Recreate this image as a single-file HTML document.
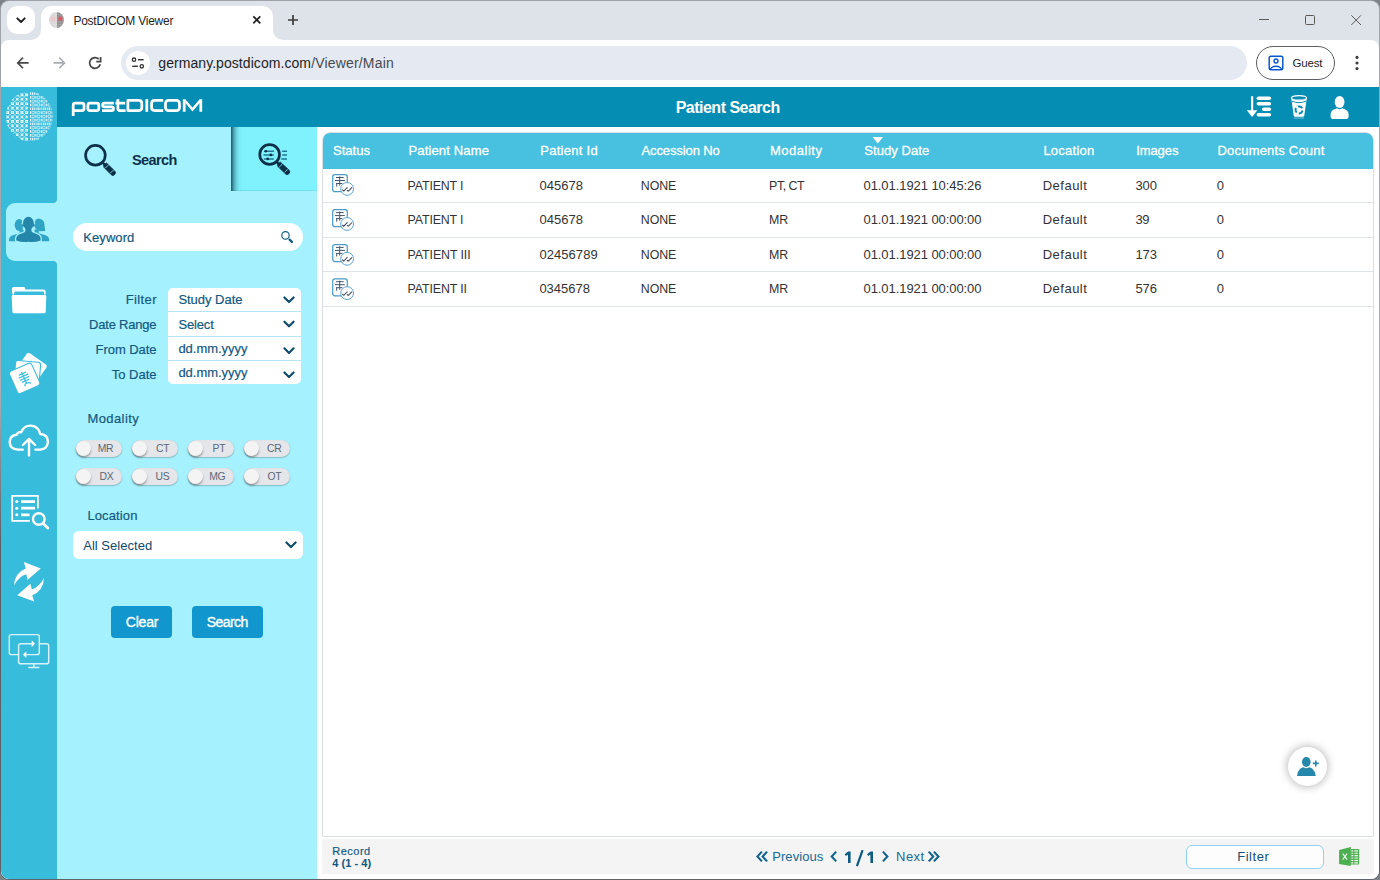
<!DOCTYPE html>
<html><head><meta charset="utf-8"><title>PostDICOM Viewer</title>
<style>
*{box-sizing:border-box;margin:0;padding:0}
html,body{width:1380px;height:880px;overflow:hidden;background:#7d8288;font-family:"Liberation Sans",sans-serif}
#win{position:absolute;left:0;top:0;width:1380px;height:880px;overflow:hidden}
#frameb{position:absolute;left:0;top:0;width:1380px;height:880px;border-radius:9px;background:linear-gradient(180deg,#9fa2a8 0%,#a9acb2 45%,#5a5d63 62%,#5f6369 100%)}
#frame{position:absolute;left:1px;top:1px;width:1378px;height:878px;background:#dee2e9;border-radius:8px;overflow:hidden}
.a{position:absolute}
.t{position:absolute;white-space:pre}
svg{position:absolute;overflow:visible}
</style></head><body>

<div id="win">
<div id="frameb"></div><div id="frame"></div>
<!-- tab search button -->
<div class="a" style="left:7px;top:6px;width:28px;height:28px;border-radius:10px;background:#fff"></div>
<!-- active tab -->
<div class="a" style="left:41px;top:6px;width:232px;height:34px;background:#fff;border-radius:10px 10px 0 0"></div>
<svg style="left:31px;top:30px" width="10" height="10"><path d="M10 0V10H0A10 10 0 0 0 10 0Z" fill="#fff"/></svg>
<svg style="left:273px;top:30px" width="10" height="10"><path d="M0 0V10H10A10 10 0 0 1 0 0Z" fill="#fff"/></svg>
<!-- toolbar -->
<div class="a" style="left:1px;top:40px;width:1378px;height:47px;background:#fff;border-radius:8px 8px 0 0"></div>
<!-- omnibox -->
<div class="a" style="left:121px;top:46px;width:1126px;height:34px;border-radius:17px;background:#e5e9f2"></div>
<div class="a" style="left:126px;top:51px;width:24px;height:24px;border-radius:12px;background:#fff"></div>
<!-- guest -->
<div class="a" style="left:1256px;top:46px;width:79px;height:34px;border-radius:17px;border:1px solid #5c5f63;background:#fff"></div>

<!-- app -->
<div class="a" style="left:1px;top:87px;width:1378px;height:792px;background:#fff;border-radius:0 0 8px 8px;overflow:hidden">
  <div class="a" style="left:0;top:0;width:56px;height:792px;background:#38bcdc"></div>
  <div class="a" style="left:56px;top:0;width:1322px;height:40px;background:#058db3"></div>
  <div class="a" style="left:56px;top:40px;width:260px;height:752px;background:#a6f1fe"></div>
  <!-- second tab -->
  <div class="a" style="left:230px;top:40px;width:86px;height:64px;background:linear-gradient(90deg,rgba(6,52,72,.82) 0,rgba(6,52,72,.6) 1.5px,rgba(6,52,72,.34) 3.5px,rgba(6,52,72,.14) 6px,rgba(6,52,72,.04) 8.5px,rgba(6,52,72,0) 11px),linear-gradient(0deg,rgba(6,52,72,.14) 0,rgba(6,52,72,0) 1.5px),#7ff2fe"></div>
  <!-- active sidebar item -->
  <div class="a" style="left:5px;top:116px;width:52px;height:58px;background:#a6f1fe;border-radius:9px 0 0 9px"></div>
</div>
<!-- keyword -->
<div class="a" style="left:73px;top:223px;width:230px;height:28px;border-radius:14px;background:#fff"></div>
<!-- selects -->
<div class="a" style="left:168px;top:288px;width:133px;height:96px;border-radius:5px;background:#fff;overflow:hidden">
 <div class="a" style="left:0;top:23px;width:133px;height:1px;background:#b9e3f7"></div>
 <div class="a" style="left:0;top:48px;width:133px;height:1px;background:#b9e3f7"></div>
 <div class="a" style="left:0;top:72px;width:133px;height:1px;background:#b9e3f7"></div>
</div>
<!-- location select -->
<div class="a" style="left:73px;top:531px;width:230px;height:28px;border-radius:6px;background:#fff"></div>
<!-- buttons -->
<div class="a" style="left:111px;top:606px;width:61px;height:32px;border-radius:4px;background:#1197cd"></div>
<div class="a" style="left:192px;top:606px;width:71px;height:32px;border-radius:4px;background:#1197cd"></div>
<!-- table container -->
<div class="a" style="left:322px;top:132px;width:1052px;height:705px;border:1px solid #d9dfe3;border-radius:8px 8px 0 0;background:#fff;overflow:hidden">
 <div class="a" style="left:0;top:0;width:1050px;height:36px;background:#48c1e0"></div>
 <div class="a" style="left:0;top:69px;width:1050px;height:1px;background:#dde3e6"></div>
 <div class="a" style="left:0;top:104px;width:1050px;height:1px;background:#dde3e6"></div>
 <div class="a" style="left:0;top:138px;width:1050px;height:1px;background:#dde3e6"></div>
 <div class="a" style="left:0;top:173px;width:1050px;height:1px;background:#dde3e6"></div>
</div>
<!-- footer -->
<div class="a" style="left:322px;top:839px;width:1052px;height:35px;background:#f4f4f4"></div>
<div class="a" style="left:1186px;top:845px;width:138px;height:24px;border:1px solid #8ed2f5;border-radius:6px;background:#fdfdfd"></div>
<!-- fab -->
<div class="a" style="left:1288px;top:747px;width:39.4px;height:39.4px;border-radius:20px;background:#fff;box-shadow:0 0 9px 1px rgba(0,0,0,.28)"></div>

<!-- ===== chrome icons ===== -->
<svg style="left:0;top:0" width="1380" height="90" fill="none" stroke-linecap="round" stroke-linejoin="round">
 <!-- tab search chevron -->
 <path d="M17.3 18.3 L21 22 L24.7 18.3" stroke="#1f1f1f" stroke-width="1.9"/>
 <!-- favicon -->
 <defs><clipPath id="fv"><ellipse cx="56.5" cy="20" rx="7.4" ry="8"/></clipPath>
 <pattern id="fvg" width="2.4" height="2.4" patternUnits="userSpaceOnUse"><path d="M0 0H2.4M0 0V2.4" stroke="#fff" stroke-width=".5" opacity=".5"/></pattern></defs>
 <g clip-path="url(#fv)" stroke="none">
  <rect x="49" y="12" width="8" height="16" fill="#d8d5d6"/>
  <rect x="57" y="12" width="8" height="16" fill="#8f8d8e"/>
  <rect x="49" y="12" width="16" height="16" fill="url(#fvg)"/>
  <circle cx="60.2" cy="18.8" r="1.7" fill="#e2515c"/><circle cx="60.2" cy="18.8" r="3" fill="#e2515c" opacity=".25"/>
  <circle cx="53" cy="19" r="2.6" fill="#f5bcc2" opacity=".6"/>
 </g>
 <!-- tab close -->
 <path d="M253.3 16.3 L260.3 23.3 M260.3 16.3 L253.3 23.3" stroke="#1f1f1f" stroke-width="1.7" stroke-linecap="butt"/>
 <!-- new tab plus -->
 <path d="M288 20 H298 M293 15 V25" stroke="#3b3b3b" stroke-width="1.7" stroke-linecap="butt"/>
 <!-- window controls -->
 <path d="M1259 19.5 H1269" stroke="#5a5a5a" stroke-width="1" stroke-linecap="butt"/>
 <rect x="1305.5" y="15.5" width="9" height="9" rx="1" stroke="#5a5a5a" stroke-width="1"/>
 <path d="M1351.3 15.3 L1361 25 M1361 15.3 L1351.3 25" stroke="#5a5a5a" stroke-width="1" stroke-linecap="butt"/>
 <!-- back -->
 <path d="M28.6 62.9 H18 M23 57.6 L17.7 62.9 L23 68.2" stroke="#474747" stroke-width="1.6" stroke-linecap="butt" stroke-linejoin="miter"/>
 <!-- forward (disabled) -->
 <path d="M53.5 62.9 H64.2 M59.2 57.6 L64.5 62.9 L59.2 68.2" stroke="#a9acb1" stroke-width="1.6" stroke-linecap="butt" stroke-linejoin="miter"/>
 <!-- reload -->
 <path d="M100.25 64.3 A5.4 5.4 0 1 1 98.7 59" stroke="#474747" stroke-width="1.75" stroke-linecap="butt"/>
 <path d="M100.6 57.1 V61.5 H96.3" stroke="#474747" stroke-width="1.75" stroke-linecap="butt" stroke-linejoin="miter"/>
 <!-- site info (tune) -->
 <circle cx="134" cy="59.7" r="1.7" stroke="#333" stroke-width="1.3"/>
 <path d="M138 59.7 H143.6" stroke="#333" stroke-width="1.4" stroke-linecap="butt"/>
 <circle cx="141.8" cy="66.3" r="1.7" stroke="#333" stroke-width="1.3"/>
 <path d="M132.3 66.3 H138" stroke="#333" stroke-width="1.4" stroke-linecap="butt"/>
 <!-- guest icon -->
 <defs><clipPath id="gc"><rect x="1269" y="56" width="14" height="14" rx="1.5"/></clipPath></defs>
 <rect x="1269.2" y="56.2" width="13.6" height="13.6" rx="1.6" stroke="#0b57d0" stroke-width="1.5"/>
 <circle cx="1276" cy="61" r="2" stroke="#0b57d0" stroke-width="1.4"/>
 <g clip-path="url(#gc)"><ellipse cx="1276" cy="70.5" rx="6" ry="4.2" stroke="#0b57d0" stroke-width="1.4"/></g>
 <!-- kebab -->
 <g fill="#3c3c3c" stroke="none"><circle cx="1357" cy="57.4" r="1.55"/><circle cx="1357" cy="63" r="1.55"/><circle cx="1357" cy="68.6" r="1.55"/></g>
</svg>
<!-- ===== wordmark postDICOM ===== -->
<svg style="left:60px;top:90px" width="160" height="34" viewBox="60 90 160 34" fill="none" stroke="#fff" stroke-width="2.75" stroke-linejoin="round" stroke-linecap="butt">
 <!-- p -->
 <path d="M73.2 116 V105.2 Q73.2 103.2 75.2 103.2 H82 Q84 103.2 84 105.2 V108.6 Q84 110.6 82 110.6 H73.2"/>
 <!-- o -->
 <rect x="87.9" y="103.2" width="10.9" height="7.4" rx="2"/>
 <!-- s -->
 <path d="M113.8 103.2 H104.5 Q102.6 103.2 102.6 105 Q102.6 106.9 104.5 106.9 H111.6 Q113.5 106.9 113.5 108.8 Q113.5 110.6 111.6 110.6 H102"/>
 <!-- t -->
 <path d="M117.9 99.2 V108.6 Q117.9 110.6 119.9 110.6 H125.6 M115.4 103.2 H125.2"/>
 <!-- D -->
 <path d="M127.9 100.4 H138.8 Q141.8 100.4 141.8 103.4 V107.6 Q141.8 110.6 138.8 110.6 H127.9 Z"/>
 <!-- I -->
 <path d="M146.8 99.2 V111.8" stroke-width="2.8"/>
 <!-- C -->
 <path d="M163.2 100.4 H154.6 Q151.6 100.4 151.6 103.4 V107.6 Q151.6 110.6 154.6 110.6 H163.2"/>
 <!-- O -->
 <rect x="165.5" y="100.4" width="14" height="10.2" rx="3"/>
 <!-- M -->
 <path d="M184.2 111.8 V99.2 M200.8 111.8 V99.2"/><path d="M184.6 100.2 L192.5 109.6 L200.4 100.2" stroke-width="2.5" stroke-linejoin="miter"/>
</svg>
<!-- ===== header icons ===== -->
<svg style="left:1240px;top:90px" width="130" height="34" viewBox="1240 90 130 34" fill="#fff" stroke="none">
 <!-- sort -->
 <rect x="1251" y="96.3" width="2.2" height="15"/>
 <path d="M1246.8 110.2 H1257.4 L1252.1 116.9 Z"/>
 <rect x="1256.6" y="96.5" width="14.5" height="3.5" rx="1.75"/>
 <rect x="1256.6" y="102" width="14.5" height="3.5" rx="1.75"/>
 <rect x="1262" y="107.5" width="9.1" height="3.5" rx="1.75"/>
 <rect x="1256.6" y="113" width="14.5" height="3.6" rx="1.8"/>
 <!-- recycle bin -->
 <path d="M1291.3 98.4 L1293.7 115.6 Q1293.9 116.8 1295.1 116.8 H1302.9 Q1304.1 116.8 1304.3 115.6 L1306.7 98.4 Q1299 102 1291.3 98.4 Z"/>
 <ellipse cx="1299" cy="97.9" rx="7.5" ry="2.3" fill="#058db3" stroke="#fff" stroke-width="1.3"/>
 <path d="M1291.7 101 Q1299 104.4 1306.3 101" fill="none" stroke="#058db3" stroke-width="1"/>
 <circle cx="1299" cy="109.9" r="3.5" fill="none" stroke="#058db3" stroke-width="2" stroke-dasharray="4.9 2.22" transform="rotate(12 1299 109.9)"/>
 <path d="M1293.8 118 H1304.2" stroke="#fff" stroke-width=".9" opacity=".55" fill="none"/>
 <!-- user -->
 <ellipse cx="1339.6" cy="102" rx="4.9" ry="6"/>
 <path d="M1330.6 119 V114.5 Q1330.6 110.3 1335.5 108.8 L1337 108.3 Q1339.6 110 1342.2 108.3 L1343.7 108.8 Q1348.6 110.3 1348.6 114.5 V117 Q1348.6 119 1346 119 H1333 Q1330.6 119 1330.6 117 Z"/>
</svg>
<!-- ===== logo sphere ===== -->
<svg style="left:0;top:87px" width="60" height="60" viewBox="0 87 60 60">
<defs><clipPath id="sph"><ellipse cx="29.4" cy="116.5" rx="23.4" ry="24.9"/></clipPath></defs>
<g fill="#fff" stroke="none" clip-path="url(#sph)">
<rect x="30.00" y="92.30" width="1.0" height="2.6" opacity="0.8"/>
<rect x="31.75" y="92.30" width="1.5" height="2.6" opacity="0.8"/>
<rect x="33.85" y="92.30" width="1.0" height="2.6" opacity="0.8"/>
<rect x="35.60" y="92.30" width="1.0" height="2.6" opacity="0.8"/>
<rect x="37.35" y="92.30" width="1.5" height="2.6" opacity="0.8"/>
<rect x="30.00" y="96.09" width="1.0" height="2.6" opacity="0.9"/>
<rect x="35.40" y="96.09" width="1.0" height="2.6" opacity="0.9"/>
<rect x="40.80" y="96.09" width="1.0" height="2.6" opacity="0.9"/>
<rect x="30.00" y="99.88" width="1.0" height="2.6" opacity="0.9"/>
<rect x="35.40" y="99.88" width="1.0" height="2.6" opacity="0.9"/>
<rect x="40.80" y="99.88" width="1.0" height="2.6" opacity="0.9"/>
<rect x="46.20" y="99.88" width="1.0" height="2.6" opacity="0.9"/>
<rect x="30.00" y="103.67" width="1.0" height="2.6" opacity="0.9"/>
<rect x="35.40" y="103.67" width="1.0" height="2.6" opacity="0.9"/>
<rect x="40.80" y="103.67" width="1.0" height="2.6" opacity="0.9"/>
<rect x="46.20" y="103.67" width="1.0" height="2.6" opacity="0.9"/>
<rect x="30.00" y="107.46" width="1.0" height="2.6" opacity="0.8"/>
<rect x="31.75" y="107.46" width="1.5" height="2.6" opacity="0.8"/>
<rect x="33.85" y="107.46" width="1.0" height="2.6" opacity="0.8"/>
<rect x="35.60" y="107.46" width="1.0" height="2.6" opacity="0.8"/>
<rect x="37.35" y="107.46" width="1.5" height="2.6" opacity="0.8"/>
<rect x="39.45" y="107.46" width="1.0" height="2.6" opacity="0.8"/>
<rect x="41.20" y="107.46" width="1.0" height="2.6" opacity="0.8"/>
<rect x="42.95" y="107.46" width="1.5" height="2.6" opacity="0.8"/>
<rect x="45.05" y="107.46" width="1.0" height="2.6" opacity="0.8"/>
<rect x="46.80" y="107.46" width="1.0" height="2.6" opacity="0.8"/>
<rect x="48.55" y="107.46" width="1.5" height="2.6" opacity="0.8"/>
<rect x="50.65" y="107.46" width="1.0" height="2.6" opacity="0.8"/>
<rect x="30.00" y="111.25" width="1.0" height="2.6" opacity="0.9"/>
<rect x="35.40" y="111.25" width="1.0" height="2.6" opacity="0.9"/>
<rect x="40.80" y="111.25" width="1.0" height="2.6" opacity="0.9"/>
<rect x="46.20" y="111.25" width="1.0" height="2.6" opacity="0.9"/>
<rect x="51.60" y="111.25" width="1.0" height="2.6" opacity="0.9"/>
<rect x="30.00" y="115.04" width="1.0" height="2.6" opacity="0.9"/>
<rect x="35.40" y="115.04" width="1.0" height="2.6" opacity="0.9"/>
<rect x="40.80" y="115.04" width="1.0" height="2.6" opacity="0.9"/>
<rect x="46.20" y="115.04" width="1.0" height="2.6" opacity="0.9"/>
<rect x="51.60" y="115.04" width="1.0" height="2.6" opacity="0.9"/>
<rect x="30.00" y="118.83" width="1.0" height="2.6" opacity="0.9"/>
<rect x="35.40" y="118.83" width="1.0" height="2.6" opacity="0.9"/>
<rect x="40.80" y="118.83" width="1.0" height="2.6" opacity="0.9"/>
<rect x="46.20" y="118.83" width="1.0" height="2.6" opacity="0.9"/>
<rect x="51.60" y="118.83" width="1.0" height="2.6" opacity="0.9"/>
<rect x="30.00" y="122.62" width="1.0" height="2.6" opacity="0.8"/>
<rect x="31.75" y="122.62" width="1.5" height="2.6" opacity="0.8"/>
<rect x="33.85" y="122.62" width="1.0" height="2.6" opacity="0.8"/>
<rect x="35.60" y="122.62" width="1.0" height="2.6" opacity="0.8"/>
<rect x="37.35" y="122.62" width="1.5" height="2.6" opacity="0.8"/>
<rect x="39.45" y="122.62" width="1.0" height="2.6" opacity="0.8"/>
<rect x="41.20" y="122.62" width="1.0" height="2.6" opacity="0.8"/>
<rect x="42.95" y="122.62" width="1.5" height="2.6" opacity="0.8"/>
<rect x="45.05" y="122.62" width="1.0" height="2.6" opacity="0.8"/>
<rect x="46.80" y="122.62" width="1.0" height="2.6" opacity="0.8"/>
<rect x="48.55" y="122.62" width="1.5" height="2.6" opacity="0.8"/>
<rect x="50.65" y="122.62" width="1.0" height="2.6" opacity="0.8"/>
<rect x="30.00" y="126.41" width="1.0" height="2.6" opacity="0.9"/>
<rect x="35.40" y="126.41" width="1.0" height="2.6" opacity="0.9"/>
<rect x="40.80" y="126.41" width="1.0" height="2.6" opacity="0.9"/>
<rect x="46.20" y="126.41" width="1.0" height="2.6" opacity="0.9"/>
<rect x="30.00" y="130.20" width="1.0" height="2.6" opacity="0.9"/>
<rect x="35.40" y="130.20" width="1.0" height="2.6" opacity="0.9"/>
<rect x="40.80" y="130.20" width="1.0" height="2.6" opacity="0.9"/>
<rect x="46.20" y="130.20" width="1.0" height="2.6" opacity="0.9"/>
<rect x="30.00" y="133.99" width="1.0" height="2.6" opacity="0.9"/>
<rect x="35.40" y="133.99" width="1.0" height="2.6" opacity="0.9"/>
<rect x="40.80" y="133.99" width="1.0" height="2.6" opacity="0.9"/>
<rect x="30.00" y="137.78" width="1.0" height="2.6" opacity="0.8"/>
<rect x="31.75" y="137.78" width="1.5" height="2.6" opacity="0.8"/>
<rect x="33.85" y="137.78" width="1.0" height="2.6" opacity="0.8"/>
<rect x="35.60" y="137.78" width="1.0" height="2.6" opacity="0.8"/>
<rect x="37.35" y="137.78" width="1.5" height="2.6" opacity="0.8"/>
<path d="M31.90 96.24h2.5v2.3h-2.5zM37.30 96.24h2.5v2.3h-2.5zM42.70 96.24h2.5v2.3h-2.5zM31.90 100.03h2.5v2.3h-2.5zM37.30 100.03h2.5v2.3h-2.5zM42.70 100.03h2.5v2.3h-2.5zM31.90 103.82h2.5v2.3h-2.5zM37.30 103.82h2.5v2.3h-2.5zM42.70 103.82h2.5v2.3h-2.5zM48.10 103.82h2.5v2.3h-2.5zM31.90 111.40h2.5v2.3h-2.5zM37.30 111.40h2.5v2.3h-2.5zM42.70 111.40h2.5v2.3h-2.5zM48.10 111.40h2.5v2.3h-2.5zM31.90 115.19h2.5v2.3h-2.5zM37.30 115.19h2.5v2.3h-2.5zM42.70 115.19h2.5v2.3h-2.5zM48.10 115.19h2.5v2.3h-2.5zM31.90 118.98h2.5v2.3h-2.5zM37.30 118.98h2.5v2.3h-2.5zM42.70 118.98h2.5v2.3h-2.5zM48.10 118.98h2.5v2.3h-2.5zM31.90 126.56h2.5v2.3h-2.5zM37.30 126.56h2.5v2.3h-2.5zM42.70 126.56h2.5v2.3h-2.5zM48.10 126.56h2.5v2.3h-2.5zM31.90 130.35h2.5v2.3h-2.5zM37.30 130.35h2.5v2.3h-2.5zM42.70 130.35h2.5v2.3h-2.5zM31.90 134.14h2.5v2.3h-2.5zM37.30 134.14h2.5v2.3h-2.5zM42.70 134.14h2.5v2.3h-2.5z" fill="none" stroke="#fff" stroke-width=".7" opacity=".8"/>
<path d="M26.70 94.90L21.92 90.48M26.70 94.90L21.92 99.32M26.70 99.32L21.92 94.90M26.70 99.32L21.92 103.74M26.70 103.74L21.92 99.32M26.70 103.74L21.92 108.16M26.70 108.16L21.92 103.74M26.70 108.16L21.92 112.58M26.70 112.58L21.92 108.16M26.70 112.58L21.92 117.00M26.70 117.00L21.92 112.58M26.70 117.00L21.92 121.42M26.70 121.42L21.92 117.00M26.70 121.42L21.92 125.84M26.70 125.84L21.92 121.42M26.70 125.84L21.92 130.26M26.70 130.26L21.92 125.84M26.70 130.26L21.92 134.68M26.70 134.68L21.92 130.26M26.70 134.68L21.92 139.10M26.70 139.10L21.92 134.68M26.70 139.10L21.92 143.52M22.00 94.90L17.22 90.48M22.00 94.90L17.22 99.32M22.00 99.32L17.22 94.90M22.00 99.32L17.22 103.74M22.00 103.74L17.22 99.32M22.00 103.74L17.22 108.16M22.00 108.16L17.22 103.74M22.00 108.16L17.22 112.58M22.00 112.58L17.22 108.16M22.00 112.58L17.22 117.00M22.00 117.00L17.22 112.58M22.00 117.00L17.22 121.42M22.00 121.42L17.22 117.00M22.00 121.42L17.22 125.84M22.00 125.84L17.22 121.42M22.00 125.84L17.22 130.26M22.00 130.26L17.22 125.84M22.00 130.26L17.22 134.68M22.00 134.68L17.22 130.26M22.00 134.68L17.22 139.10M22.00 139.10L17.22 134.68M22.00 139.10L17.22 143.52M17.25 94.90L12.47 90.48M17.25 94.90L12.47 99.32M17.25 99.32L12.47 94.90M17.25 99.32L12.47 103.74M17.25 103.74L12.47 99.32M17.25 103.74L12.47 108.16M17.25 108.16L12.47 103.74M17.25 108.16L12.47 112.58M17.25 112.58L12.47 108.16M17.25 112.58L12.47 117.00M17.25 117.00L12.47 112.58M17.25 117.00L12.47 121.42M17.25 121.42L12.47 117.00M17.25 121.42L12.47 125.84M17.25 125.84L12.47 121.42M17.25 125.84L12.47 130.26M17.25 130.26L12.47 125.84M17.25 130.26L12.47 134.68M17.25 134.68L12.47 130.26M17.25 134.68L12.47 139.10M12.45 99.32L7.67 94.90M12.45 99.32L7.67 103.74M12.45 103.74L7.67 99.32M12.45 103.74L7.67 108.16M12.45 108.16L7.67 103.74M12.45 108.16L7.67 112.58M12.45 112.58L7.67 108.16M12.45 112.58L7.67 117.00M12.45 117.00L7.67 112.58M12.45 117.00L7.67 121.42M12.45 121.42L7.67 117.00M12.45 121.42L7.67 125.84M12.45 125.84L7.67 121.42M12.45 125.84L7.67 130.26M12.45 130.26L7.67 125.84M12.45 130.26L7.67 134.68M7.65 108.16L2.87 103.74M7.65 108.16L2.87 112.58M7.65 112.58L2.87 108.16M7.65 112.58L2.87 117.00M7.65 117.00L2.87 112.58M7.65 117.00L2.87 121.42M7.65 121.42L2.87 117.00M7.65 121.42L2.87 125.84M7.65 125.84L2.87 121.42M7.65 125.84L2.87 130.26" fill="none" stroke="#fff" stroke-width=".7" opacity=".6"/>
<path d="M25.50 98.02h2.4v2.6h-2.4zM25.50 106.86h2.4v2.6h-2.4zM25.50 115.70h2.4v2.6h-2.4zM25.50 124.54h2.4v2.6h-2.4zM25.50 133.38h2.4v2.6h-2.4zM20.80 98.02h2.4v2.6h-2.4zM20.80 106.86h2.4v2.6h-2.4zM20.80 115.70h2.4v2.6h-2.4zM20.80 124.54h2.4v2.6h-2.4zM20.80 133.38h2.4v2.6h-2.4zM16.05 98.02h2.4v2.6h-2.4zM16.05 106.86h2.4v2.6h-2.4zM16.05 115.70h2.4v2.6h-2.4zM16.05 124.54h2.4v2.6h-2.4zM16.05 133.38h2.4v2.6h-2.4zM11.25 98.02h2.4v2.6h-2.4zM11.25 106.86h2.4v2.6h-2.4zM11.25 115.70h2.4v2.6h-2.4zM11.25 124.54h2.4v2.6h-2.4zM6.45 106.86h2.4v2.6h-2.4zM6.45 115.70h2.4v2.6h-2.4zM6.45 124.54h2.4v2.6h-2.4z" opacity=".72"/>
<path d="M25.35 93.55h2.7v2.7h-2.7zM25.35 102.39h2.7v2.7h-2.7zM25.35 111.23h2.7v2.7h-2.7zM25.35 120.07h2.7v2.7h-2.7zM25.35 128.91h2.7v2.7h-2.7zM25.35 137.75h2.7v2.7h-2.7zM20.65 93.55h2.7v2.7h-2.7zM20.65 102.39h2.7v2.7h-2.7zM20.65 111.23h2.7v2.7h-2.7zM20.65 120.07h2.7v2.7h-2.7zM20.65 128.91h2.7v2.7h-2.7zM20.65 137.75h2.7v2.7h-2.7zM15.90 93.55h2.7v2.7h-2.7zM15.90 102.39h2.7v2.7h-2.7zM15.90 111.23h2.7v2.7h-2.7zM15.90 120.07h2.7v2.7h-2.7zM15.90 128.91h2.7v2.7h-2.7zM11.10 102.39h2.7v2.7h-2.7zM11.10 111.23h2.7v2.7h-2.7zM11.10 120.07h2.7v2.7h-2.7zM11.10 128.91h2.7v2.7h-2.7zM6.30 111.23h2.7v2.7h-2.7zM6.30 120.07h2.7v2.7h-2.7z" opacity=".97"/>
<path d="M26.25 94.45h.9v.9h-.9zM26.25 103.29h.9v.9h-.9zM26.25 112.13h.9v.9h-.9zM26.25 120.97h.9v.9h-.9zM26.25 129.81h.9v.9h-.9zM26.25 138.65h.9v.9h-.9zM21.55 94.45h.9v.9h-.9zM21.55 103.29h.9v.9h-.9zM21.55 112.13h.9v.9h-.9zM21.55 120.97h.9v.9h-.9zM21.55 129.81h.9v.9h-.9zM21.55 138.65h.9v.9h-.9zM16.80 94.45h.9v.9h-.9zM16.80 103.29h.9v.9h-.9zM16.80 112.13h.9v.9h-.9zM16.80 120.97h.9v.9h-.9zM16.80 129.81h.9v.9h-.9zM12.00 103.29h.9v.9h-.9zM12.00 112.13h.9v.9h-.9zM12.00 120.97h.9v.9h-.9zM12.00 129.81h.9v.9h-.9zM7.20 112.13h.9v.9h-.9zM7.20 120.97h.9v.9h-.9z" fill="#38bcdc" opacity=".85"/>
</g></svg><!-- ===== sidebar icons ===== -->
<svg style="left:0;top:190px" width="58" height="500" viewBox="0 190 58 500" fill="#fff" stroke="none">
 <!-- concave corners of active item -->
 <path d="M57 203 H53 A4 4 0 0 0 57 199 Z" fill="#a6f1fe"/>
 <path d="M57 261 H53 A4 4 0 0 1 57 265 Z" fill="#a6f1fe"/>
 <!-- people: side figures -->
 <g fill="#2fa4c4">
  <ellipse cx="19.2" cy="225" rx="4.5" ry="6"/>
  <path d="M9 241.2 V239.6 Q9.2 236.2 13.4 235 L18.6 233.4 Q20 232.8 19.6 231 L19.4 229.6 H23.6 V241.2 Z"/>
  <ellipse cx="38.8" cy="224.6" rx="4.4" ry="6"/>
  <path d="M35.6 219.8 Q40.4 217.6 43.4 221 Q44.6 223 44.6 226 Q44.8 229 45.3 231 L39 231.2 Z"/>
  <path d="M49.2 241.2 V239.6 Q49 236.2 44.8 235 L39.6 233.4 Q38.2 232.8 38.6 231 L38.8 229.6 H34.6 V241.2 Z"/>
 </g>
 <!-- people: centre figure with outline gap -->
 <g fill="#a6f1fe" stroke="#a6f1fe" stroke-width="2.6" stroke-linejoin="round">
  <ellipse cx="28.4" cy="223.2" rx="5.4" ry="6.4"/>
  <path d="M25.4 227.5 V230.6 Q25.4 232 24 232.6 L19.6 234.2 Q16.4 235.4 16.2 238.6 V240.4 Q22 242.6 28.4 241.8 Q34.8 242.6 40.6 240.4 V238.6 Q40.4 235.4 37.2 234.2 L32.8 232.6 Q31.4 232 31.4 230.6 V227.5 Z"/>
 </g>
 <g fill="#2487aa">
  <ellipse cx="28.4" cy="223.2" rx="5.4" ry="6.4"/>
  <ellipse cx="23" cy="225.4" rx=".9" ry="1.4"/><ellipse cx="33.8" cy="225.4" rx=".9" ry="1.4"/>
  <path d="M25.4 227.5 V230.6 Q25.4 232 24 232.6 L19.6 234.2 Q16.4 235.4 16.2 238.6 V240.4 Q22 242.6 28.4 241.8 Q34.8 242.6 40.6 240.4 V238.6 Q40.4 235.4 37.2 234.2 L32.8 232.6 Q31.4 232 31.4 230.6 V227.5 Z"/>
 </g>
 <!-- folder -->
 <path d="M12 292 V288.6 Q12 287 13.6 287 H23.6 Q25 287 25.2 288.4 L25.4 289.6 H43.6 Q45.6 289.6 45.6 291.6 V294.6 H44 V292.8 Q44 291.6 42.8 291.6 H15.4 Q14.2 291.6 14.2 292.8 V294.6 H12.6 Z"/>
 <path d="M11.7 296.4 Q11.6 295 13 295 H45 Q46.4 295 46.3 296.4 L45.7 311.9 Q45.6 313.3 44.2 313.3 H13.9 Q12.5 313.3 12.4 311.9 Z"/>
 <!-- xray cards -->
 <g transform="translate(31 368.6) rotate(35)"><rect x="-12" y="-12" width="24" height="24" rx="2.2"/></g>
 <g transform="translate(27.2 374) rotate(5)"><rect x="-12.6" y="-12.6" width="25.2" height="25.2" rx="2.6" stroke="#38bcdc" stroke-width="1.1"/></g>
 <g transform="translate(24.6 378.4) rotate(-24)"><rect x="-12.2" y="-12.2" width="24.4" height="24.4" rx="2.8" stroke="#38bcdc" stroke-width="1.1"/>
  <g stroke="#38bcdc" stroke-width="1.25" fill="none" stroke-linecap="round"><path d="M-0.2 -6.6 V5.2 M-3.6 -5.2 H3.4 M-4.8 -2.6 H4.6 M-4.6 0 H4.6 M-3.4 2.6 H3.2 M-2.6 7 Q-2.6 5 -0.2 5.2 Q2.4 5 3.4 6.6"/></g></g>
 <!-- cloud upload -->
 <g fill="none" stroke="#fff" stroke-width="2.4" stroke-linecap="round" stroke-linejoin="round">
  <path d="M22.8 449.6 H17.6 Q9.8 449.2 9.7 441.8 Q10 435.6 16.6 434.8 Q17.6 431.6 21.2 432.2 Q24 425.4 31 425.6 Q38.6 426.2 40.2 434 Q47.8 434.4 47.9 441.8 Q47.6 449.2 40.4 449.6 H35.4"/>
  <path d="M29 455.4 V439.6 M22.9 445 L29 438.9 L35.1 445"/>
 </g>
 <!-- list search -->
 <g fill="none" stroke="#fff" stroke-width="1.7" stroke-linejoin="miter">
  <path d="M30 520.8 H12.2 V495.9 H37.9 V508.6"/>
  <path d="M21 501.6 H35 M21 508.2 H35 M21 514.8 H29.6" stroke-width="2.7"/>
  <circle cx="38.8" cy="519" r="5.8" stroke-width="2.4"/>
  <path d="M43.4 523.8 L47.8 528" stroke-width="2.8" stroke-linecap="round"/>
 </g>
 <g><circle cx="16.8" cy="501.6" r="1.5"/><circle cx="16.8" cy="508.2" r="1.5"/><circle cx="16.8" cy="514.8" r="1.5"/></g>
 <!-- sync arrows -->
 <path d="M14 585.6 Q14.6 572.6 25.8 568.4 L23.8 562 L40.8 568.4 L27.6 579.8 L26.2 574.2 Q18.6 576.6 14 585.6 Z"/>
 <path d="M44 578 Q43.4 591 32.2 595.2 L34.2 601.6 L17.2 595.2 L30.4 583.8 L31.8 589.4 Q39.4 587 44 578 Z"/>
 <!-- monitors -->
 <g fill="none" stroke="#d8f3fb" stroke-width="1.45" stroke-linejoin="round" stroke-linecap="round">
  <path d="M18 654.6 H11.4 Q9.3 654.6 9.3 652.5 V636.7 Q9.3 634.6 11.4 634.6 H37.2 Q39.3 634.6 39.3 636.7 V652.5 Q39.3 654.6 37.2 654.6 H24.4"/>
  <path d="M33 643.7 H20.7 Q18.6 643.7 18.6 645.8 V661.7 Q18.6 663.8 20.7 663.8 H46.6 Q48.7 663.8 48.7 661.7 V645.8 Q48.7 643.7 46.6 643.7 H39.6"/>
  <path d="M33.8 663.8 V667.2 M28.8 667.4 H38.8"/>
 </g>
 <path d="M32 640.9 L34.6 643.7 L32 646.5 Z M26 651.8 L23.3 654.6 L26 657.4 Z" fill="#fff" stroke="#fff" stroke-width=".6" stroke-linejoin="round"/>
</svg>
<!-- ===== panel icons ===== -->
<svg style="left:57px;top:127px" width="262" height="450" viewBox="57 127 262 450" fill="none" stroke="none">
<circle cx="95.4" cy="155.3" r="9.85" stroke="#0d3049" stroke-width="2.7"/>
<path d="M102.9 162.9 L105.6 165.4" stroke="#0d3049" stroke-width="2.4"/>
<path d="M103.7 165.1 L106.5 163.1 L114.6 171 A2.5 2.5 0 0 1 111.1 174.6 L104 167.3 Z" fill="#0d3049" stroke="#0d3049" stroke-width="1" stroke-linejoin="round"/>
<path d="M105.3 168.1 L108.4 165 M110.3 173.2 L113.4 170.1" stroke="#a6f1fe" stroke-width=".8"/>
<circle cx="269.6" cy="154.5" r="9.85" stroke="#0d3049" stroke-width="2.7"/>
<path d="M276.9 162 L279.4 164.3" stroke="#0d3049" stroke-width="2.4"/>
<path d="M277.6 164.2 L280.4 162.2 L288.9 170.1 A2.5 2.5 0 0 1 285.4 173.7 L277.9 166.4 Z" fill="#0d3049" stroke="#0d3049" stroke-width="1" stroke-linejoin="round"/>
<path d="M279.2 167.2 L282.3 164.1 M284.6 172.3 L287.7 169.2" stroke="#7ff2fe" stroke-width=".8"/>
<path d="M264 151.2 H273.9 M263.5 154.9 H273.9 M263.8 158.9 H273.9" stroke="#1f7896" stroke-width="1.5"/>
<circle cx="265.8" cy="151.2" r="1.25" fill="#0d3049"/><circle cx="270.8" cy="154.9" r="1.35" fill="#0d3049"/><circle cx="267.7" cy="158.9" r="1.35" fill="#0d3049"/>
<path d="M282.2 151.2 H287 M282.2 154.9 H287 M281.2 158.9 H287" stroke="#1f7896" stroke-width="1.5"/>
<path d="M270 147.2 Q276 148 277 153.6" stroke="#7ff2fe" stroke-width=".8" opacity=".9"/>
<circle cx="285.5" cy="235.4" r="3.7" stroke="#0f5f85" stroke-width="1.2"/>
<path d="M289.6 239.6 L291.9 241.9" stroke="#0f5f85" stroke-width="2.3" stroke-linecap="round"/>
<path d="M284.4 297.4 L289 302.0 L293.6 297.4" stroke="#0e4a6a" stroke-width="2.15" stroke-linecap="round" stroke-linejoin="round"/>
<path d="M284.4 321.7 L289 326.3 L293.6 321.7" stroke="#0e4a6a" stroke-width="2.15" stroke-linecap="round" stroke-linejoin="round"/>
<path d="M284.4 348.3 L289 352.9 L293.6 348.3" stroke="#0e4a6a" stroke-width="2.15" stroke-linecap="round" stroke-linejoin="round"/>
<path d="M284.4 372.4 L289 377.0 L293.6 372.4" stroke="#0e4a6a" stroke-width="2.15" stroke-linecap="round" stroke-linejoin="round"/>
<path d="M286.4 542.5 L291 547.1 L295.6 542.5" stroke="#0e4a6a" stroke-width="2.15" stroke-linecap="round" stroke-linejoin="round"/>
</svg>
<!-- toggles -->
<div class="a" style="left:75.5px;top:440.2px;width:46.3px;height:16.4px;border-radius:8.2px;background:#e4e6ea;box-shadow:0 1px 1.5px rgba(0,0,0,.22),inset 0 0 1px rgba(0,0,0,.15)"></div>
<div class="a" style="left:76.1px;top:440.8px;width:15px;height:15px;border-radius:7.5px;background:#f4f4f4;box-shadow:0 1.5px 2px rgba(0,0,0,.35)"></div>
<div class="a" style="left:131.5px;top:440.2px;width:46.3px;height:16.4px;border-radius:8.2px;background:#e4e6ea;box-shadow:0 1px 1.5px rgba(0,0,0,.22),inset 0 0 1px rgba(0,0,0,.15)"></div>
<div class="a" style="left:132.1px;top:440.8px;width:15px;height:15px;border-radius:7.5px;background:#f4f4f4;box-shadow:0 1.5px 2px rgba(0,0,0,.35)"></div>
<div class="a" style="left:187.5px;top:440.2px;width:46.3px;height:16.4px;border-radius:8.2px;background:#e4e6ea;box-shadow:0 1px 1.5px rgba(0,0,0,.22),inset 0 0 1px rgba(0,0,0,.15)"></div>
<div class="a" style="left:188.1px;top:440.8px;width:15px;height:15px;border-radius:7.5px;background:#f4f4f4;box-shadow:0 1.5px 2px rgba(0,0,0,.35)"></div>
<div class="a" style="left:243.5px;top:440.2px;width:46.3px;height:16.4px;border-radius:8.2px;background:#e4e6ea;box-shadow:0 1px 1.5px rgba(0,0,0,.22),inset 0 0 1px rgba(0,0,0,.15)"></div>
<div class="a" style="left:244.1px;top:440.8px;width:15px;height:15px;border-radius:7.5px;background:#f4f4f4;box-shadow:0 1.5px 2px rgba(0,0,0,.35)"></div>
<div class="a" style="left:75.5px;top:468.2px;width:46.3px;height:16.4px;border-radius:8.2px;background:#e4e6ea;box-shadow:0 1px 1.5px rgba(0,0,0,.22),inset 0 0 1px rgba(0,0,0,.15)"></div>
<div class="a" style="left:76.1px;top:468.8px;width:15px;height:15px;border-radius:7.5px;background:#f4f4f4;box-shadow:0 1.5px 2px rgba(0,0,0,.35)"></div>
<div class="a" style="left:131.5px;top:468.2px;width:46.3px;height:16.4px;border-radius:8.2px;background:#e4e6ea;box-shadow:0 1px 1.5px rgba(0,0,0,.22),inset 0 0 1px rgba(0,0,0,.15)"></div>
<div class="a" style="left:132.1px;top:468.8px;width:15px;height:15px;border-radius:7.5px;background:#f4f4f4;box-shadow:0 1.5px 2px rgba(0,0,0,.35)"></div>
<div class="a" style="left:187.5px;top:468.2px;width:46.3px;height:16.4px;border-radius:8.2px;background:#e4e6ea;box-shadow:0 1px 1.5px rgba(0,0,0,.22),inset 0 0 1px rgba(0,0,0,.15)"></div>
<div class="a" style="left:188.1px;top:468.8px;width:15px;height:15px;border-radius:7.5px;background:#f4f4f4;box-shadow:0 1.5px 2px rgba(0,0,0,.35)"></div>
<div class="a" style="left:243.5px;top:468.2px;width:46.3px;height:16.4px;border-radius:8.2px;background:#e4e6ea;box-shadow:0 1px 1.5px rgba(0,0,0,.22),inset 0 0 1px rgba(0,0,0,.15)"></div>
<div class="a" style="left:244.1px;top:468.8px;width:15px;height:15px;border-radius:7.5px;background:#f4f4f4;box-shadow:0 1.5px 2px rgba(0,0,0,.35)"></div><!-- ===== table icons ===== -->
<svg style="left:320px;top:130px" width="1060" height="750" viewBox="320 130 1060 750" fill="none" stroke="none">
<path d="M872.6 137 H883 L877.8 143.6 Z" fill="#fff"/>
<g transform="translate(0 0)">
<rect x="332.7" y="174.6" width="14.6" height="17" rx="2.2" fill="#fff" stroke="#4e9cc6" stroke-width="1.25"/>
<path d="M339.7 176.4 V185.6 M336 177.5 H343.7 M335 180.5 H344.8 M336 183.5 H342.4 M336.7 183.6 V186.6" stroke="#44546a" stroke-width="1"/>
<circle cx="347.1" cy="188.9" r="6.4" fill="#fff" stroke="#5aa3cc" stroke-width="1"/>
<path d="M342.3 189.7 L343.8 191.1 L347.5 187.3 M346.9 190.3 L348.4 191.1 L352 187.4" stroke="#3b4a60" stroke-width="1.05"/>
</g>
<g transform="translate(0 35.1)">
<rect x="332.7" y="174.6" width="14.6" height="17" rx="2.2" fill="#fff" stroke="#4e9cc6" stroke-width="1.25"/>
<path d="M339.7 176.4 V185.6 M336 177.5 H343.7 M335 180.5 H344.8 M336 183.5 H342.4 M336.7 183.6 V186.6" stroke="#44546a" stroke-width="1"/>
<circle cx="347.1" cy="188.9" r="6.4" fill="#fff" stroke="#5aa3cc" stroke-width="1"/>
<path d="M342.3 189.7 L343.8 191.1 L347.5 187.3 M346.9 190.3 L348.4 191.1 L352 187.4" stroke="#3b4a60" stroke-width="1.05"/>
</g>
<g transform="translate(0 69.9)">
<rect x="332.7" y="174.6" width="14.6" height="17" rx="2.2" fill="#fff" stroke="#4e9cc6" stroke-width="1.25"/>
<path d="M339.7 176.4 V185.6 M336 177.5 H343.7 M335 180.5 H344.8 M336 183.5 H342.4 M336.7 183.6 V186.6" stroke="#44546a" stroke-width="1"/>
<circle cx="347.1" cy="188.9" r="6.4" fill="#fff" stroke="#5aa3cc" stroke-width="1"/>
<path d="M342.3 189.7 L343.8 191.1 L347.5 187.3 M346.9 190.3 L348.4 191.1 L352 187.4" stroke="#3b4a60" stroke-width="1.05"/>
</g>
<g transform="translate(0 104.2)">
<rect x="332.7" y="174.6" width="14.6" height="17" rx="2.2" fill="#fff" stroke="#4e9cc6" stroke-width="1.25"/>
<path d="M339.7 176.4 V185.6 M336 177.5 H343.7 M335 180.5 H344.8 M336 183.5 H342.4 M336.7 183.6 V186.6" stroke="#44546a" stroke-width="1"/>
<circle cx="347.1" cy="188.9" r="6.4" fill="#fff" stroke="#5aa3cc" stroke-width="1"/>
<path d="M342.3 189.7 L343.8 191.1 L347.5 187.3 M346.9 190.3 L348.4 191.1 L352 187.4" stroke="#3b4a60" stroke-width="1.05"/>
</g>
<path d="M761.9 851.6 L757.4 856.5 L761.9 861.4 M767.1 851.6 L762.6 856.5 L767.1 861.4 M836.2 851.6 L831.7 856.5 L836.2 861.4 M882.9 851.6 L887.4 856.5 L882.9 861.4 M928.7 851.6 L933.2 856.5 L928.7 861.4 M933.9 851.6 L938.4 856.5 L933.9 861.4" stroke="#12648f" stroke-width="2.1" stroke-linejoin="miter"/>
<ellipse cx="1306.3" cy="762" rx="4.3" ry="5" fill="#2588ab"/>
<path d="M1297 776 Q1297.4 771.4 1300.4 768.6 Q1302 767.4 1303.6 767.2 Q1306.3 769.2 1309 767.2 Q1310.6 767.4 1312.2 768.6 Q1315.2 771.4 1315.8 776 Z" fill="#2588ab"/>
<path d="M1312.8 763.4 H1318.8 M1315.8 760.4 V766.4" stroke="#2588ab" stroke-width="1.6"/>
<path d="M1339.1 850 L1350.8 847.1 V866 L1339.1 864 Z" fill="#4caf50"/>
<rect x="1350.6" y="848.9" width="8.5" height="15.5" rx=".6" fill="#4caf50"/>
<rect x="1351.4" y="850.3" width="1.9" height="1.2" fill="#fff" opacity="1"/><rect x="1354.4" y="850.3" width="3.6" height="1.2" fill="#fff" opacity="1"/>
<rect x="1351.4" y="852.7" width="1.9" height="1.2" fill="#fff" opacity=".75"/><rect x="1354.4" y="852.7" width="3.6" height="1.2" fill="#fff" opacity=".75"/>
<rect x="1351.4" y="855.1" width="1.9" height="1.2" fill="#fff" opacity="1"/><rect x="1354.4" y="855.1" width="3.6" height="1.2" fill="#fff" opacity="1"/>
<rect x="1351.4" y="857.5" width="1.9" height="1.2" fill="#fff" opacity=".75"/><rect x="1354.4" y="857.5" width="3.6" height="1.2" fill="#fff" opacity=".75"/>
<rect x="1351.4" y="859.9" width="1.9" height="1.2" fill="#fff" opacity="1"/><rect x="1354.4" y="859.9" width="3.6" height="1.2" fill="#fff" opacity="1"/>
<rect x="1351.4" y="862.3" width="1.9" height="1.2" fill="#fff" opacity="1"/><rect x="1354.4" y="862.3" width="3.6" height="1.2" fill="#fff" opacity="1"/>
<path d="M1342.7 853.6 L1347.1 859.6 M1347.1 853.6 L1342.7 859.6" stroke="#e8f5e9" stroke-width="1.2"/>
<path d="M856.9 866.1 L862.6 850.1" stroke="#0e5a84" stroke-width="2.2" fill="none"/>
<path d="M848.1 851.4 H850.6 V863 H848 V854.5 L845.9 856.1 L844.7 854.3 Z M 870.5 851.4H 873.0V 863.0H 870.4V 854.5L 868.3 856.1L 867.1 854.3 Z" fill="#0e5a84"/>
</svg>
<!-- text -->
<span class="t" style="left:73.40px;top:15.00px;font-size:12px;line-height:12px;color:#1f1f1f;letter-spacing:-0.254px;">PostDICOM Viewer</span>
<span class="t" style="left:158.30px;top:56.00px;font-size:14px;line-height:14px;color:#1f1f1f;letter-spacing:0.062px;">germany.postdicom.com</span>
<span class="t" style="left:311.30px;top:56.00px;font-size:14px;line-height:14px;color:#474a4e;letter-spacing:0.157px;">/Viewer/Main</span>
<span class="t" style="left:1292.50px;top:58.25px;font-size:11.5px;line-height:11.5px;color:#1f1f1f;letter-spacing:-0.172px;">Guest</span>
<span class="t" style="left:675.70px;top:99.50px;font-size:16px;line-height:16px;color:#ffffff;font-weight:700;letter-spacing:-0.512px;">Patient Search</span>
<span class="t" style="left:132.00px;top:152.75px;font-size:14.5px;line-height:14.5px;color:#0d3049;font-weight:700;letter-spacing:-0.615px;">Search</span>
<span class="t" style="left:83.30px;top:231.00px;font-size:13px;line-height:13px;color:#11587e;letter-spacing:0.070px;-webkit-text-stroke:.18px #11587e;">Keyword</span>
<span class="t" style="left:125.80px;top:293.00px;font-size:13px;line-height:13px;color:#11587e;letter-spacing:0.362px;-webkit-text-stroke:.18px #11587e;">Filter</span>
<span class="t" style="left:89.10px;top:318.00px;font-size:13px;line-height:13px;color:#11587e;letter-spacing:-0.221px;-webkit-text-stroke:.18px #11587e;">Date Range</span>
<span class="t" style="left:95.60px;top:343.00px;font-size:13px;line-height:13px;color:#11587e;letter-spacing:-0.063px;-webkit-text-stroke:.18px #11587e;">From Date</span>
<span class="t" style="left:111.80px;top:368.00px;font-size:13px;line-height:13px;color:#11587e;letter-spacing:-0.019px;-webkit-text-stroke:.18px #11587e;">To Date</span>
<span class="t" style="left:178.40px;top:293.00px;font-size:13px;line-height:13px;color:#11587e;letter-spacing:-0.025px;-webkit-text-stroke:.18px #11587e;">Study Date</span>
<span class="t" style="left:178.40px;top:318.00px;font-size:13px;line-height:13px;color:#11587e;letter-spacing:-0.148px;-webkit-text-stroke:.18px #11587e;">Select</span>
<span class="t" style="left:178.40px;top:342.00px;font-size:13px;line-height:13px;color:#11587e;letter-spacing:-0.027px;-webkit-text-stroke:.18px #11587e;">dd.mm.yyyy</span>
<span class="t" style="left:178.40px;top:366.00px;font-size:13px;line-height:13px;color:#11587e;letter-spacing:-0.027px;-webkit-text-stroke:.18px #11587e;">dd.mm.yyyy</span>
<span class="t" style="left:87.40px;top:412.00px;font-size:13px;line-height:13px;color:#11587e;letter-spacing:0.425px;-webkit-text-stroke:.18px #11587e;">Modality</span>
<span class="t" style="left:87.40px;top:509.00px;font-size:13px;line-height:13px;color:#11587e;letter-spacing:0.121px;-webkit-text-stroke:.18px #11587e;">Location</span>
<span class="t" style="left:83.20px;top:539.00px;font-size:13px;line-height:13px;color:#0e4a6a;letter-spacing:0.031px;">All Selected</span>
<span class="t" style="left:125.80px;top:615.00px;font-size:14px;line-height:14px;color:#ffffff;letter-spacing:-0.217px;-webkit-text-stroke:.35px #fff;">Clear</span>
<span class="t" style="left:206.70px;top:615.00px;font-size:14px;line-height:14px;color:#ffffff;letter-spacing:-0.552px;-webkit-text-stroke:.35px #fff;">Search</span>
<span class="t" style="left:97.73px;top:444.30px;font-size:10.4px;line-height:10.4px;color:#5b6776;letter-spacing:-.25px;">MR</span>
<span class="t" style="left:156.04px;top:444.30px;font-size:10.4px;line-height:10.4px;color:#5b6776;letter-spacing:-.25px;">CT</span>
<span class="t" style="left:212.62px;top:444.30px;font-size:10.4px;line-height:10.4px;color:#5b6776;letter-spacing:-.25px;">PT</span>
<span class="t" style="left:266.88px;top:444.30px;font-size:10.4px;line-height:10.4px;color:#5b6776;letter-spacing:-.25px;">CR</span>
<span class="t" style="left:99.46px;top:472.30px;font-size:10.4px;line-height:10.4px;color:#5b6776;letter-spacing:-.25px;">DX</span>
<span class="t" style="left:155.46px;top:472.30px;font-size:10.4px;line-height:10.4px;color:#5b6776;letter-spacing:-.25px;">US</span>
<span class="t" style="left:209.15px;top:472.30px;font-size:10.4px;line-height:10.4px;color:#5b6776;letter-spacing:-.25px;">MG</span>
<span class="t" style="left:267.46px;top:472.30px;font-size:10.4px;line-height:10.4px;color:#5b6776;letter-spacing:-.25px;">OT</span>
<span class="t" style="left:333.00px;top:144.00px;font-size:13px;line-height:13px;color:#ffffff;letter-spacing:0.028px;-webkit-text-stroke:.3px #fff;">Status</span>
<span class="t" style="left:408.40px;top:144.00px;font-size:13px;line-height:13px;color:#ffffff;letter-spacing:0.167px;-webkit-text-stroke:.3px #fff;">Patient Name</span>
<span class="t" style="left:540.20px;top:144.00px;font-size:13px;line-height:13px;color:#ffffff;letter-spacing:0.285px;-webkit-text-stroke:.3px #fff;">Patient Id</span>
<span class="t" style="left:641.50px;top:144.00px;font-size:13px;line-height:13px;color:#ffffff;letter-spacing:-0.108px;-webkit-text-stroke:.3px #fff;">Accession No</span>
<span class="t" style="left:769.90px;top:144.00px;font-size:13px;line-height:13px;color:#ffffff;letter-spacing:0.525px;-webkit-text-stroke:.3px #fff;">Modality</span>
<span class="t" style="left:864.30px;top:144.00px;font-size:13px;line-height:13px;color:#ffffff;letter-spacing:0.064px;-webkit-text-stroke:.3px #fff;">Study Date</span>
<span class="t" style="left:1043.40px;top:144.00px;font-size:13px;line-height:13px;color:#ffffff;letter-spacing:0.249px;-webkit-text-stroke:.3px #fff;">Location</span>
<span class="t" style="left:1136.20px;top:144.00px;font-size:13px;line-height:13px;color:#ffffff;letter-spacing:-0.088px;-webkit-text-stroke:.3px #fff;">Images</span>
<span class="t" style="left:1217.50px;top:144.00px;font-size:13px;line-height:13px;color:#ffffff;letter-spacing:0.196px;-webkit-text-stroke:.3px #fff;">Documents Count</span>
<span class="t" style="left:407.60px;top:179.80px;font-size:12.4px;line-height:12.4px;color:#333333;letter-spacing:-0.157px;">PATIENT I</span>
<span class="t" style="left:539.40px;top:179.00px;font-size:13px;line-height:13px;color:#333333;letter-spacing:0.022px;">045678</span>
<span class="t" style="left:640.80px;top:179.80px;font-size:12.4px;line-height:12.4px;color:#333333;letter-spacing:-0.071px;">NONE</span>
<span class="t" style="left:769.10px;top:179.80px;font-size:12.4px;line-height:12.4px;color:#333333;letter-spacing:-0.455px;">PT, CT</span>
<span class="t" style="left:863.50px;top:179.00px;font-size:13px;line-height:13px;color:#333333;letter-spacing:-0.071px;">01.01.1921 10:45:26</span>
<span class="t" style="left:1042.70px;top:179.00px;font-size:13px;line-height:13px;color:#333333;letter-spacing:0.499px;">Default</span>
<span class="t" style="left:1135.40px;top:179.00px;font-size:13px;line-height:13px;color:#333333;letter-spacing:-0.102px;">300</span>
<span class="t" style="left:1216.80px;top:179.00px;font-size:13px;line-height:13px;color:#333333;">0</span>
<span class="t" style="left:407.60px;top:213.80px;font-size:12.4px;line-height:12.4px;color:#333333;letter-spacing:-0.157px;">PATIENT I</span>
<span class="t" style="left:539.40px;top:213.00px;font-size:13px;line-height:13px;color:#333333;letter-spacing:0.022px;">045678</span>
<span class="t" style="left:640.80px;top:213.80px;font-size:12.4px;line-height:12.4px;color:#333333;letter-spacing:-0.071px;">NONE</span>
<span class="t" style="left:769.10px;top:213.80px;font-size:12.4px;line-height:12.4px;color:#333333;letter-spacing:-0.081px;">MR</span>
<span class="t" style="left:863.50px;top:213.00px;font-size:13px;line-height:13px;color:#333333;letter-spacing:-0.071px;">01.01.1921 00:00:00</span>
<span class="t" style="left:1042.70px;top:213.00px;font-size:13px;line-height:13px;color:#333333;letter-spacing:0.499px;">Default</span>
<span class="t" style="left:1135.40px;top:213.00px;font-size:13px;line-height:13px;color:#333333;letter-spacing:-0.269px;">39</span>
<span class="t" style="left:1216.80px;top:213.00px;font-size:13px;line-height:13px;color:#333333;">0</span>
<span class="t" style="left:407.60px;top:248.80px;font-size:12.4px;line-height:12.4px;color:#333333;letter-spacing:-0.103px;">PATIENT III</span>
<span class="t" style="left:539.40px;top:248.00px;font-size:13px;line-height:13px;color:#333333;letter-spacing:0.065px;">02456789</span>
<span class="t" style="left:640.80px;top:248.80px;font-size:12.4px;line-height:12.4px;color:#333333;letter-spacing:-0.071px;">NONE</span>
<span class="t" style="left:769.10px;top:248.80px;font-size:12.4px;line-height:12.4px;color:#333333;letter-spacing:-0.081px;">MR</span>
<span class="t" style="left:863.50px;top:248.00px;font-size:13px;line-height:13px;color:#333333;letter-spacing:-0.071px;">01.01.1921 00:00:00</span>
<span class="t" style="left:1042.70px;top:248.00px;font-size:13px;line-height:13px;color:#333333;letter-spacing:0.499px;">Default</span>
<span class="t" style="left:1135.40px;top:248.00px;font-size:13px;line-height:13px;color:#333333;letter-spacing:-0.102px;">173</span>
<span class="t" style="left:1216.80px;top:248.00px;font-size:13px;line-height:13px;color:#333333;">0</span>
<span class="t" style="left:407.60px;top:282.80px;font-size:12.4px;line-height:12.4px;color:#333333;letter-spacing:-0.133px;">PATIENT II</span>
<span class="t" style="left:539.40px;top:282.00px;font-size:13px;line-height:13px;color:#333333;letter-spacing:-0.021px;">0345678</span>
<span class="t" style="left:640.80px;top:282.80px;font-size:12.4px;line-height:12.4px;color:#333333;letter-spacing:-0.071px;">NONE</span>
<span class="t" style="left:769.10px;top:282.80px;font-size:12.4px;line-height:12.4px;color:#333333;letter-spacing:-0.081px;">MR</span>
<span class="t" style="left:863.50px;top:282.00px;font-size:13px;line-height:13px;color:#333333;letter-spacing:-0.071px;">01.01.1921 00:00:00</span>
<span class="t" style="left:1042.70px;top:282.00px;font-size:13px;line-height:13px;color:#333333;letter-spacing:0.499px;">Default</span>
<span class="t" style="left:1135.40px;top:282.00px;font-size:13px;line-height:13px;color:#333333;letter-spacing:-0.102px;">576</span>
<span class="t" style="left:1216.80px;top:282.00px;font-size:13px;line-height:13px;color:#333333;">0</span>
<span class="t" style="left:332.30px;top:845.50px;font-size:11px;line-height:11px;color:#11587e;letter-spacing:0.486px;-webkit-text-stroke:.18px #11587e;">Record</span>
<span class="t" style="left:332.30px;top:857.50px;font-size:11px;line-height:11px;color:#11587e;font-weight:700;letter-spacing:0.048px;">4 (1 - 4)</span>
<span class="t" style="left:772.20px;top:850.00px;font-size:13px;line-height:13px;color:#176a94;letter-spacing:0.075px;">Previous</span>
<span class="t" style="left:896.00px;top:850.00px;font-size:13px;line-height:13px;color:#176a94;letter-spacing:0.489px;">Next</span>
<span class="t" style="left:1237.20px;top:850.00px;font-size:13px;line-height:13px;color:#14506f;letter-spacing:0.542px;">Filter</span>
</div>
</body></html>
